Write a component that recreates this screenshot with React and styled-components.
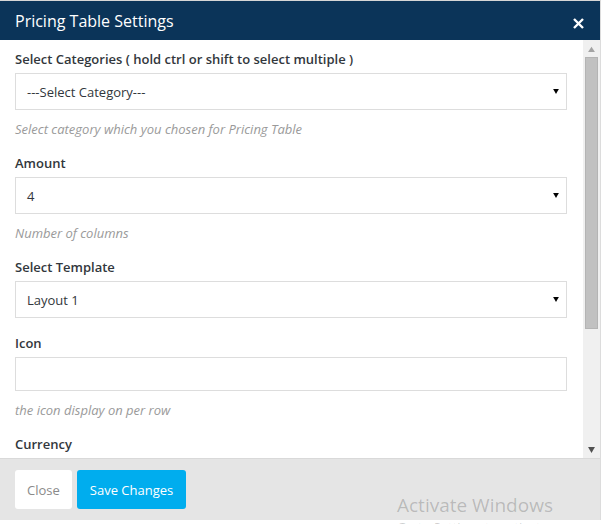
import React from "react";
import styled, { createGlobalStyle } from "styled-components";

const GlobalStyle = createGlobalStyle`
  html, body {
    margin: 0;
    padding: 0;
    background: #fff;
    overflow: hidden;
  }
  body {
    font-family: "Open Sans", "Noto Sans", Arial, sans-serif;
  }
`;

const Screen = styled.div`
  position: relative;
  width: 601px;
  height: 524px;
  overflow: hidden;
  background: #fff;
`;

const Modal = styled.div`
  display: flex;
  flex-direction: column;
  width: 600px;
  border-top: 1px solid #d6d6d6;
  border-right: 1px solid #dcdcdc;
  background: #fff;
`;

const Header = styled.div`
  display: flex;
  align-items: center;
  justify-content: space-between;
  height: 39px;
  padding: 0 15px;
  background: #0b3459;
  color: #fff;
`;

const Title = styled.h4`
  margin: 0;
  font-size: 16px;
  font-weight: 400;
  line-height: 22px;
`;

const CloseX = styled.button`
  display: flex;
  align-items: center;
  justify-content: center;
  width: 14px;
  height: 14px;
  padding: 0;
  margin-top: 6px;
  border: 0;
  background: none;
  cursor: pointer;
`;

const Body = styled.div`
  display: flex;
  height: 418px;
`;

const Content = styled.div`
  flex: 1;
  overflow: hidden;
  padding: 9px 16px 0 15px;
`;

const Field = styled.div`
  margin-bottom: 15px;
`;

const Label = styled.label`
  display: block;
  margin-bottom: 4px;
  font-size: 13px;
  font-weight: 600;
  line-height: 20px;
  color: #32373c;
`;

const Box = styled.div`
  display: flex;
  align-items: center;
  justify-content: space-between;
  box-sizing: border-box;
  height: ${(p) => p.$h}px;
  padding: 0 7px 0 11px;
  border: 1px solid #dddddd;
  background: #fff;
  font-size: 13px;
  color: #32373c;
`;

const Help = styled.p`
  margin: 10px 0 0;
  font-size: 13px;
  font-style: italic;
  line-height: 18px;
  color: #9a9a9a;
`;

const Scrollbar = styled.div`
  display: flex;
  flex-direction: column;
  align-items: center;
  width: 17px;
  background: #f0f0f0;
`;

const ScrollArrow = styled.div`
  display: flex;
  align-items: center;
  justify-content: center;
  height: 17px;
`;

const Thumb = styled.div`
  box-sizing: border-box;
  width: 13px;
  height: 272px;
  background: #c1c1c1;
  border: 1px solid #b4b4b4;
`;

const Track = styled.div`
  flex: 1;
`;

const Footer = styled.div`
  display: flex;
  gap: 5px;
  box-sizing: border-box;
  height: 62px;
  padding: 11px 15px;
  border-top: 1px solid #d9d9d9;
  background: #e5e5e5;
`;

const Button = styled.button`
  height: 39px;
  padding: 0 ${(p) => (p.$primary ? 13 : 12)}px;
  border: 0;
  border-radius: 3px;
  background: ${(p) => (p.$primary ? "#00adee" : "#fff")};
  color: ${(p) => (p.$primary ? "#fff" : "#8a8a8a")};
  font-family: inherit;
  font-size: 13px;
  cursor: pointer;
`;

const Watermark = styled.div`
  position: absolute;
  left: 397px;
  top: 491px;
  color: rgba(0, 0, 0, 0.2);
  pointer-events: none;
`;

const WatermarkTitle = styled.div`
  font-size: 19px;
  line-height: 28px;
`;

const WatermarkSub = styled.div`
  font-size: 13px;
  line-height: 16px;
`;

const Arrow = ({ color = "#000", up, size = 7 }) => (
  <svg width={size} height={size - 1} viewBox="0 0 8 7">
    <path d={up ? "M0 7 L4 1 L8 7 Z" : "M0 0 L8 0 L4 7 Z"} fill={color} />
  </svg>
);

const fields = [
  {
    label: "Select Categories ( hold ctrl or shift to select multiple )",
    value: "---Select Category---",
    select: true,
    help: "Select category which you chosen for Pricing Table",
  },
  { label: "Amount", value: "4", select: true, help: "Number of columns" },
  { label: "Select Template", value: "Layout 1", select: true },
  { label: "Icon", value: "", help: "the icon display on per row" },
  { label: "Currency", value: "" },
];

const App = () => {
  return (
    <Screen>
      <GlobalStyle />
      <Modal>
        <Header>
          <Title>Pricing Table Settings</Title>
          <CloseX aria-label="Close">
            <svg width="11" height="11" viewBox="0 0 11 11">
              <path
                d="M1 1 L10 10 M10 1 L1 10"
                stroke="#fff"
                strokeWidth="2.4"
              />
            </svg>
          </CloseX>
        </Header>
        <Body>
          <Content>
            {fields.map((f) => (
              <Field key={f.label}>
                <Label>{f.label}</Label>
                <Box $h={f.select ? 37 : 34}>
                  <span>{f.value}</span>
                  {f.select && <Arrow size={6} />}
                </Box>
                {f.help && <Help>{f.help}</Help>}
              </Field>
            ))}
          </Content>
          <Scrollbar>
            <ScrollArrow>
              <Arrow up color="#a3a3a3" />
            </ScrollArrow>
            <Thumb />
            <Track />
            <ScrollArrow>
              <Arrow color="#505050" />
            </ScrollArrow>
          </Scrollbar>
        </Body>
        <Footer>
          <Button>Close</Button>
          <Button $primary>Save Changes</Button>
        </Footer>
      </Modal>
      <Watermark>
        <WatermarkTitle>Activate Windows</WatermarkTitle>
        <WatermarkSub>Go to Settings to activate Windows.</WatermarkSub>
      </Watermark>
    </Screen>
  );
};

export default App;
